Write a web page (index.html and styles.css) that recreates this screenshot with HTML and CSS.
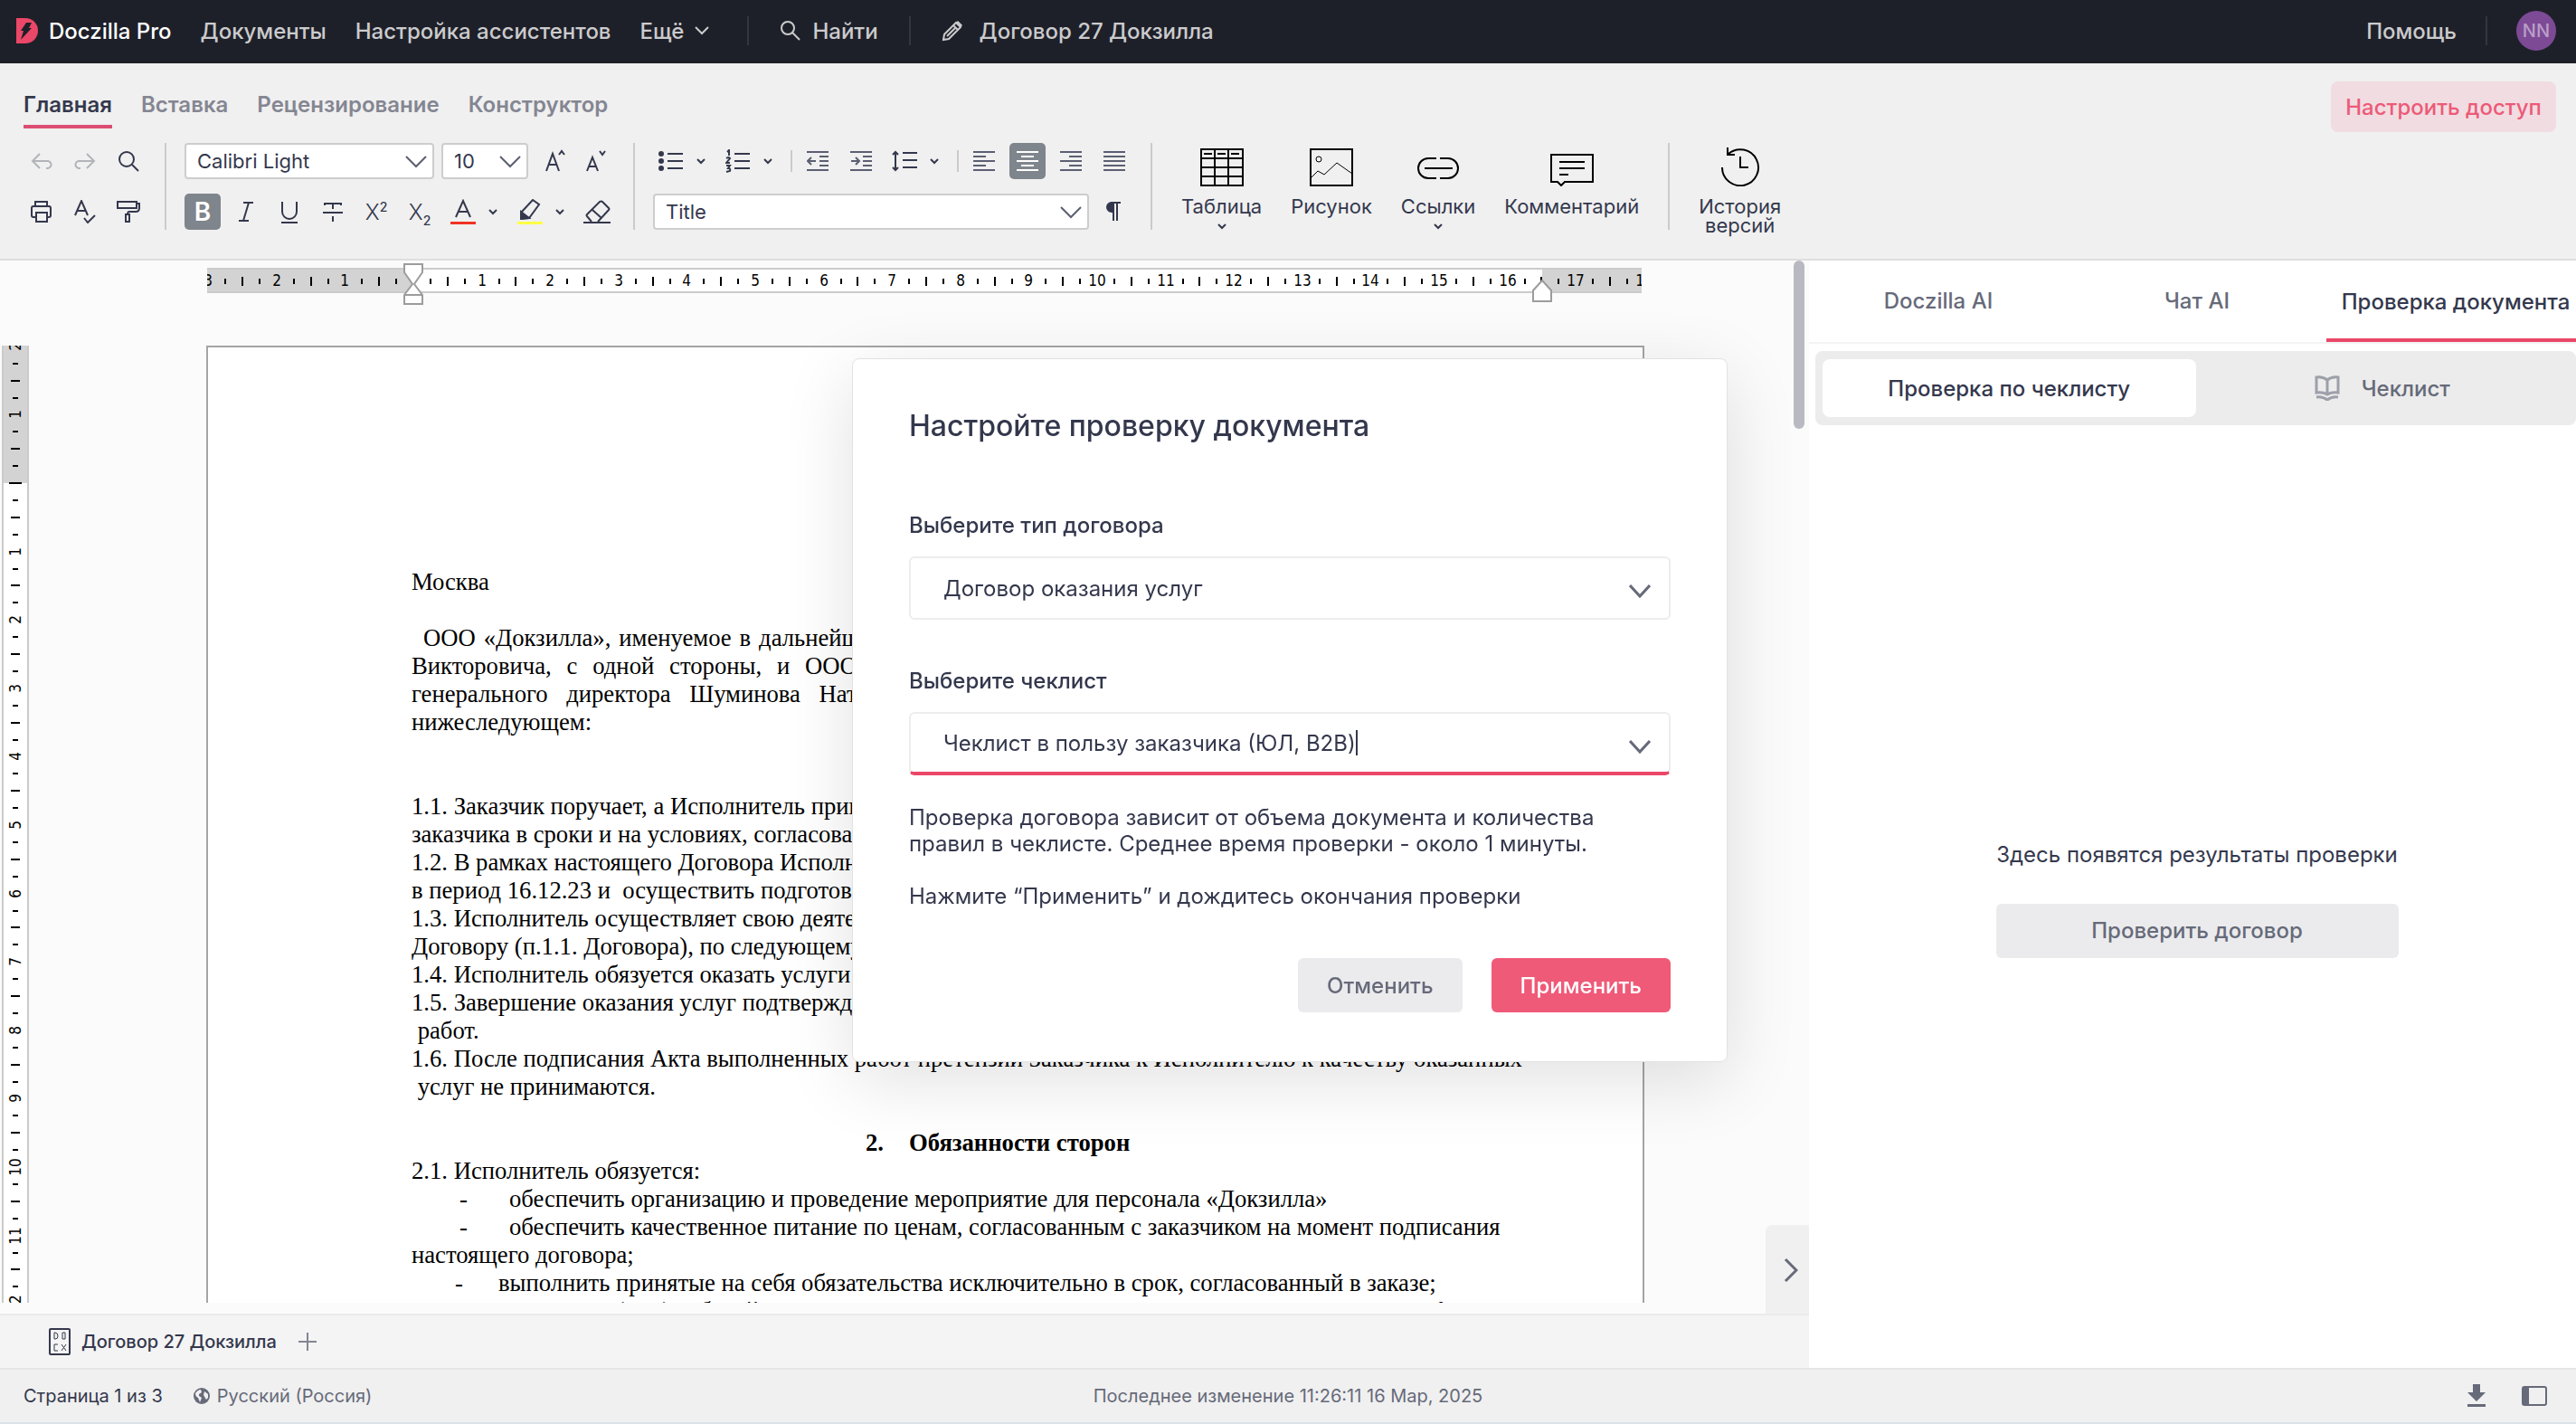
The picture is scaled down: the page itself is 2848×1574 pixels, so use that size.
FILE: index.html
```html
<!DOCTYPE html>
<html lang="ru">
<head>
    <meta charset="UTF-8">
    <meta name="viewport" content="width=device-width, initial-scale=1.0">
    <title>Doczilla Pro</title>
    <link rel="stylesheet" href="styles.css">
</head>
<body>

    <header class="topbar">
        <a class="brand" href="#">
            <svg width="24" height="28" viewBox="0 0 24 28"><path d="M0 0h10a14 14 0 0 1 0 28H0z" fill="#eb4768"/><path d="M11 5h6l-3 6h3L5 24l3-10H5z" fill="#1e2029"/></svg>
            Doczilla Pro
        </a>
        <nav class="topnav">
            <a href="#">Документы</a>
            <a href="#">Настройка ассистентов</a>
            <a class="more" href="#">Ещё
                <svg class="line" width="16" height="10" viewBox="0 0 16 10"><path d="M1 1l7 7 7-7"/></svg>
            </a>
        </nav>
        <span class="top-divider"></span>
        <button class="top-button">
            <svg class="line" width="24" height="24" viewBox="0 0 24 24"><circle cx="9" cy="9" r="7"/><path d="M14 14l8 8"/></svg>
            Найти
        </button>
        <span class="top-divider"></span>
        <button class="top-button doc-name">
            <svg class="line" width="24" height="24" viewBox="0 0 24 24"><path d="M2 22l1-6L16 3l5 5L8 21zM13 6l5 5M6 18L16 8"/><path d="M17 2l5 5" stroke-width="3"/></svg>
            Договор 27 Докзилла
        </button>
        <div class="top-right">
            <a href="#">Помощь</a>
            <span class="top-divider"></span>
            <button class="avatar">NN</button>
        </div>
    </header>

    <section class="ribbon">
        <div class="ribbon-head">
            <nav class="ribbon-tabs">
                <a class="active" href="#">Главная</a>
                <a href="#">Вставка</a>
                <a href="#">Рецензирование</a>
                <a href="#">Конструктор</a>
            </nav>
            <button class="access">Настроить доступ</button>
        </div>

        <div class="toolbar">
            <div class="group">
                <div class="row">
                    <button class="tool muted" aria-label="Отменить ввод"><svg class="line" width="24" height="24" viewBox="0 0 24 24"><path d="M10 4L2 12l8 8M2 12h16a4 4 0 0 1 1 8h-2"/></svg></button>
                    <button class="tool muted" aria-label="Повторить ввод"><svg class="line" width="24" height="24" viewBox="0 0 24 24"><path d="M14 4l8 8-8 8M22 12H6a4 4 0 0 0-1 8h2"/></svg></button>
                    <button class="tool" aria-label="Поиск"><svg class="line" width="24" height="24" viewBox="0 0 24 24"><circle cx="10" cy="10" r="8"/><path d="M16 16l7 7"/></svg></button>
                </div>
                <div class="row">
                    <button class="tool" aria-label="Печать"><svg class="line" width="24" height="24" viewBox="0 0 24 24"><path d="M5 6V1h13v5M5 18H3a2 2 0 0 1-2-2V8a2 2 0 0 1 2-2h17a2 2 0 0 1 2 2v8a2 2 0 0 1-2 2h-2M6 13h12v10H6z"/></svg></button>
                    <button class="tool" aria-label="Правописание"><svg class="line" width="24" height="26" viewBox="0 0 24 26"><path d="M1 17L8 1l7 16M4 12h8M11 20l4 5 8-8"/></svg></button>
                    <button class="tool" aria-label="Формат по образцу"><svg class="line" width="26" height="24" viewBox="0 0 26 24"><path d="M1 1h21v7H1zM22 3h3v5q0 4-4 4h-7q-2 0-2 3M10 15h4v8h-4z"/></svg></button>
                </div>
            </div>
            <span class="divider"></span>

            <div class="group">
                <div class="row">
                    <div class="picker font-picker">
                        <select aria-label="Шрифт"><option>Calibri Light</option></select>
                        <svg class="line" width="24" height="14" viewBox="0 0 24 14"><path d="M1 1l11 11L23 1"/></svg>
                    </div>
                    <div class="picker size-picker">
                        <select aria-label="Размер шрифта"><option>10</option></select>
                        <svg class="line" width="24" height="14" viewBox="0 0 24 14"><path d="M1 1l11 11L23 1"/></svg>
                    </div>
                    <div class="size-steps">
                        <button class="tool" aria-label="Увеличить шрифт"><svg class="line" width="24" height="26" viewBox="0 0 24 26"><path d="M2 24L9 5l7 19M5 17h8M16 6l3-4 3 4"/></svg></button>
                        <button class="tool" aria-label="Уменьшить шрифт"><svg class="line" width="24" height="26" viewBox="0 0 24 26"><path d="M3 24L9 9l6 15M5 19h8M17 2l3 4 3-4"/></svg></button>
                    </div>
                </div>
                <div class="row">
                    <button class="tool pressed bold">B</button>
                    <button class="tool" aria-label="Курсив"><svg class="line" width="24" height="24" viewBox="0 0 24 24"><path d="M9 2h11M4 22h11M15 2L9 22"/></svg></button>
                    <button class="tool" aria-label="Подчёркнутый"><svg class="line" width="24" height="26" viewBox="0 0 24 26"><path d="M4 2v11a8 8 0 0 0 16 0V2M3 25h18"/></svg></button>
                    <button class="tool" aria-label="Зачёркнутый"><svg class="line" width="24" height="24" viewBox="0 0 24 24"><path d="M3 5V3h18v2M12 3v6M1 13h22M12 17v6"/></svg></button>
                    <button class="tool script"><span>X<sup>2</sup></span></button>
                    <button class="tool script"><span>X<sub>2</sub></span></button>
                    <button class="tool" aria-label="Цвет текста"><svg class="line" width="28" height="28" viewBox="0 0 28 28"><path d="M6 20L14 2l8 18M9 14h10"/><path d="M0 25h28v4H0z" fill="#f03224" stroke="none"/></svg></button>
                    <button class="arrow" aria-label="Выбрать цвет текста"><svg class="line" width="10" height="8" viewBox="0 0 10 8"><path d="M1 2l4 4 4-4"/></svg></button>
                    <button class="tool" aria-label="Выделение цветом"><svg class="line" width="28" height="28" viewBox="0 0 28 28"><path d="M4 22v-7L17 1l7 5-11 15z"/><path d="M4 14l9 7-9 1z" fill="#34384d"/><path d="M0 25h28v4H0z" fill="#ffff46" stroke="none"/></svg></button>
                    <button class="arrow" aria-label="Выбрать цвет выделения"><svg class="line" width="10" height="8" viewBox="0 0 10 8"><path d="M1 2l4 4 4-4"/></svg></button>
                    <button class="tool" aria-label="Очистить формат"><svg class="line" width="30" height="26" viewBox="0 0 30 26"><path d="M0 25h30M9 24l-5-6q-1-1 0-2L18 2q2-1 3 0l7 7q1 1 0 2L16 24M10 11l10 9"/></svg></button>
                </div>
            </div>
            <span class="divider"></span>

            <div class="group">
                <div class="row">
                    <button class="tool" aria-label="Маркированный список"><svg class="line" width="28" height="24" viewBox="0 0 28 24"><path d="M10 4h17M10 12h17M10 20h17"/><g fill="#34384d" stroke="none"><circle cx="3" cy="4" r="3"/><circle cx="3" cy="12" r="3"/><circle cx="3" cy="20" r="3"/></g></svg></button>
                    <button class="arrow" aria-label="Вид маркеров"><svg class="line" width="10" height="8" viewBox="0 0 10 8"><path d="M1 2l4 4 4-4"/></svg></button>
                    <button class="tool" aria-label="Нумерованный список"><svg class="line" width="28" height="26" viewBox="0 0 28 26"><path d="M10 5h17M10 13h17M10 21h17M2 3l2-2v6M1 10q3-2 4 0l-4 5h4M1 18h4l-2 3q3 0 2 3l-4 1"/></svg></button>
                    <button class="arrow" aria-label="Вид нумерации"><svg class="line" width="10" height="8" viewBox="0 0 10 8"><path d="M1 2l4 4 4-4"/></svg></button>
                    <span class="small-divider"></span>
                    <button class="tool soft" aria-label="Уменьшить отступ"><svg class="line" width="24" height="24" viewBox="0 0 24 24"><path d="M0 2h24M14 7h10M14 12h10M14 17h10M0 22h24M5 8l-4 4 4 4M1 12h9"/></svg></button>
                    <button class="tool soft" aria-label="Увеличить отступ"><svg class="line" width="24" height="24" viewBox="0 0 24 24"><path d="M0 2h24M14 7h10M14 12h10M14 17h10M0 22h24M6 8l4 4-4 4M10 12H1"/></svg></button>
                    <button class="tool" aria-label="Интервал"><svg class="line" width="28" height="24" viewBox="0 0 28 24"><path d="M4 2v20M1 5l3-3 3 3M1 19l3 3 3-3M12 3h16M12 11h16M12 19h16"/></svg></button>
                    <button class="arrow" aria-label="Выбрать интервал"><svg class="line" width="10" height="8" viewBox="0 0 10 8"><path d="M1 2l4 4 4-4"/></svg></button>
                    <span class="small-divider"></span>
                    <button class="tool soft" aria-label="По левому краю"><svg class="line" width="24" height="24" viewBox="0 0 24 24"><path d="M0 2h24M0 7h14M0 12h24M0 17h14M0 22h24"/></svg></button>
                    <button class="tool pressed" aria-label="По центру"><svg class="line" width="24" height="24" viewBox="0 0 24 24"><path d="M0 2h24M5 7h14M0 12h24M5 17h14M0 22h24"/></svg></button>
                    <button class="tool soft" aria-label="По правому краю"><svg class="line" width="24" height="24" viewBox="0 0 24 24"><path d="M0 2h24M10 7h14M0 12h24M10 17h14M0 22h24"/></svg></button>
                    <button class="tool soft" aria-label="По ширине"><svg class="line" width="24" height="24" viewBox="0 0 24 24"><path d="M0 2h24M0 7h24M0 12h24M0 17h24M0 22h24"/></svg></button>
                </div>
                <div class="row">
                    <div class="picker style-picker">
                        <select aria-label="Стиль"><option>Title</option></select>
                        <svg class="line" width="24" height="14" viewBox="0 0 24 14"><path d="M1 1l11 11L23 1"/></svg>
                    </div>
                    <button class="tool" aria-label="Непечатаемые знаки"><svg class="line" width="24" height="24" viewBox="0 0 24 24"><path d="M11 2v20M15 2v20M8 2h11"/><path d="M11 2v10H9A5 5 0 0 1 9 2z" fill="#34384d"/></svg></button>
                </div>
            </div>
            <span class="divider"></span>

            <div class="big-buttons">
                <button class="big">
                    <svg class="big-icon" width="48" height="48" viewBox="0 0 48 48"><path d="M1 7h46v40H1zM1 17h46M1 27h46M1 37h46M16 7v40M31 7v40M4 12h9M19 12h9M34 12h9"/></svg>
                    Таблица
                    <svg class="line big-arrow" width="10" height="8" viewBox="0 0 10 8"><path d="M1 2l4 4 4-4"/></svg>
                </button>
                <button class="big">
                    <svg class="big-icon" width="48" height="48" viewBox="0 0 48 48"><path d="M1 7h46v40H1z"/><path d="M2 38l7-7 7 4L30 22l17 12" stroke-width="1"/><circle cx="10" cy="18" r="3" stroke-width="1"/></svg>
                    Рисунок
                </button>
                <button class="big">
                    <svg class="big-icon" width="48" height="48" viewBox="0 0 48 48"><path d="M22 17H13a11 11 0 0 0 0 22h9M26 17h9a11 11 0 0 1 0 22h-9M9 28h31"/></svg>
                    Ссылки
                    <svg class="line big-arrow" width="10" height="8" viewBox="0 0 10 8"><path d="M1 2l4 4 4-4"/></svg>
                </button>
                <button class="big">
                    <svg class="big-icon" width="48" height="48" viewBox="0 0 48 48"><path d="M1 13h46v30H16l-4 4-4-4H1zM10 21h28M10 28h28M10 35h10"/></svg>
                    Комментарий
                </button>
            </div>
            <span class="divider"></span>
            <button class="big">
                <svg class="big-icon" width="48" height="48" viewBox="0 0 48 48"><path d="M4 27a20 20 0 1 0 7-15M10 5v8h8M24 15v12h9"/></svg>
                История<br>версий
            </button>
        </div>
    </section>

    <main class="workspace">
        <section class="editor">
            <div class="canvas">
                <div class="h-ruler">
                    <svg id="hRuler" width="100%" height="28"></svg>
                    <svg class="marker indent-marker" width="22" height="46" viewBox="0 0 22 46"><path d="M1 1h20v9l-9 13 9 12v10H1V35l9-12L1 10zM1 35h20"/></svg>
                    <svg class="marker right-marker" width="22" height="26" viewBox="0 0 22 26"><path d="M11 2l10 11v12H1V13z"/></svg>
                </div>
                <div class="sheet-area">
                    <div class="v-ruler"><svg id="vRuler" width="30" height="100%"></svg></div>
                    <article class="sheet">
                        <p>Москва</p>
                        <p class="gap justified first">ООО «Докзилла», именуемое в дальнейшем «Исполнитель», в лице генерального директора Петрова Льва</p>
                        <p class="justified">Викторовича, с одной стороны, и ООО «Сервисный», именуемое в дальнейшем «Заказчик», в лице</p>
                        <p class="justified">генерального директора Шуминова Натана Петровича, совместно заключили настоящий договор о</p>
                        <p>нижеследующем:</p>
                        <p class="gap double">1.1. Заказчик поручает, а Исполнитель принимает на себя обязательства по оказанию услуг для</p>
                        <p>заказчика в сроки и на условиях, согласованных сторонами.</p>
                        <p>1.2. В рамках настоящего Договора Исполнитель обязуется провести мероприятие</p>
                        <p>в период 16.12.23 и &nbsp;осуществить подготовку к нему.</p>
                        <p>1.3. Исполнитель осуществляет свою деятельность по настоящему</p>
                        <p>Договору (п.1.1. Договора), по следующему адресу.</p>
                        <p>1.4. Исполнитель обязуется оказать услуги в полном объеме.</p>
                        <p>1.5. Завершение оказания услуг подтверждается Актом выполненных</p>
                        <p>&nbsp;работ.</p>
                        <p>1.6. После подписания Акта выполненных работ претензии Заказчика к Исполнителю к качеству оказанных</p>
                        <p>&nbsp;услуг не принимаются.</p>
                        <h3 class="gap"><span>2.</span>Обязанности сторон</h3>
                        <p>2.1. Исполнитель обязуется:</p>
                        <p class="item"><span>-</span>обеспечить организацию и проведение мероприятие для персонала «Докзилла»</p>
                        <p class="item"><span>-</span>обеспечить качественное питание по ценам, согласованным с заказчиком на момент подписания</p>
                        <p>настоящего договора;</p>
                        <p class="item near"><span>-</span>выполнить принятые на себя обязательства исключительно в срок, согласованный в заказе;</p>
                        <p class="item near"><span>-</span>провести 2 (Две) рабочей встречи с представителями персонала на площадке Заказчика в офисе</p>
                    </article>
                </div>
                <span class="scroll-thumb"></span>
                <button class="expand" aria-label="Свернуть панель"><svg class="line" width="16" height="28" viewBox="0 0 16 28"><path d="M2 2l12 12L2 26"/></svg></button>
            </div>

            <div class="doc-tabs">
                <a class="doc-tab" href="#">
                    <svg width="24" height="30" viewBox="0 0 24 30" fill="none" stroke="#34384d"><rect x="1" y="1" width="22" height="28" rx="1" stroke-width="2"/><path d="M6 5v7h1q3 0 3-3 0-4-3-4zM15 5h3v7h-3zM10 18H6v7h4M14 18l5 7M19 18l-5 7"/></svg>
                    Договор 27 Докзилла
                </a>
                <button class="add-tab" aria-label="Добавить"><svg class="line" width="20" height="20" viewBox="0 0 20 20"><path d="M10 0v20M0 10h20"/></svg></button>
            </div>
        </section>

        <aside class="panel">
            <nav class="panel-tabs">
                <a href="#">Doczilla AI</a>
                <a href="#">Чат AI</a>
                <a class="active" href="#">Проверка документа</a>
            </nav>
            <div class="segments">
                <button class="active">Проверка по чеклисту</button>
                <button>
                    <svg class="line" width="28" height="28" viewBox="0 0 28 28"><path d="M14 5q-5-4-12-3v17q7-1 12 2 5-3 12-2V2q-7-1-12 3zM14 5v16M2 24q7-1 12 3 5-4 12-3"/></svg>
                    Чеклист
                </button>
            </div>
            <div class="empty">
                <p>Здесь появятся результаты проверки</p>
                <button class="grey-button">Проверить договор</button>
            </div>
        </aside>
    </main>

    <footer class="statusbar">
        <span class="pages">Страница 1 из 3</span>
        <span class="language">
            <svg width="18" height="18" viewBox="0 0 18 18"><circle cx="9" cy="9" r="9" fill="#666a79"/><path d="M2 6q3-4 6-4l1 3-3 2v2l3 2-2 5q-1-3-2-5-3-1-3-5zM12 4l4 3v4l-2 2-3-5z" fill="#f0f0f0"/></svg>
            Русский (Россия)
        </span>
        <span class="changed">Последнее изменение 11:26:11 16 Мар, 2025</span>
        <div class="status-icons">
            <button aria-label="Скачать"><svg width="20" height="26" viewBox="0 0 20 26"><path d="M6 0h8v9h6L10 19 0 9h6zM0 22h20v3H0z" fill="#666a79"/></svg></button>
            <button aria-label="Панель"><svg width="28" height="22" viewBox="0 0 28 22"><rect x="1" y="1" width="26" height="20" rx="2" fill="none" stroke="#666a79" stroke-width="2"/><path d="M1 1h7v20H1z" fill="#666a79"/></svg></button>
        </div>
    </footer>

    <div class="backdrop">
        <form class="modal">
            <h2>Настройте проверку документа</h2>
            <label for="contractType">Выберите тип договора</label>
            <div class="field">
                <select id="contractType"><option>Договор оказания услуг</option></select>
                <svg class="line" width="24" height="16" viewBox="0 0 24 16"><path d="M1 1l11 12L23 1"/></svg>
            </div>
            <label for="checklist">Выберите чеклист</label>
            <div class="field focused">
                <input type="text" id="checklist" value="Чеклист в пользу заказчика (ЮЛ, B2B)">
                <span class="caret"></span>
                <svg class="line" width="24" height="16" viewBox="0 0 24 16"><path d="M1 1l11 12L23 1"/></svg>
            </div>
            <p>Проверка договора зависит от объема документа и количества<br>правил в чеклисте. Среднее время проверки - около 1 минуты.</p>
            <p>Нажмите “Применить” и дождитесь окончания проверки</p>
            <div class="modal-buttons">
                <button type="button" class="grey-button">Отменить</button>
                <button type="button" class="apply">Применить</button>
            </div>
        </form>
    </div>

    <script>
        // one centimetre on both rulers, in hundredths of a pixel
        const cm = 7560;

        // marks every quarter of a centimetre, with a number on each whole one
        function drawRuler(id, origin, fromQ, toQ, vertical) {
            let html = '';
            const mid = vertical ? 15 : 14;

            for (let q = fromQ; q <= toQ; q++) {
                const pos = Math.round(origin + q * cm / 400);

                if (q % 4 === 0 && q !== 0) {
                    const num = Math.abs(q / 4);
                    html += vertical
                        ? `<text transform="translate(${mid + 6} ${pos}) rotate(-90)">${num}</text>`
                        : `<text x="${pos}" y="${mid + 6}">${num}</text>`;
                    continue;
                }

                const half = q === 0 ? 7 : (q % 2 === 0 ? 5 : 3);
                html += vertical
                    ? `<rect x="${mid - half}" y="${pos - 1}" width="${half * 2}" height="2"/>`
                    : `<rect x="${pos - 1}" y="${mid + 1 - half}" width="2" height="${half * 2}"/>`;
            }

            document.getElementById(id).innerHTML = html;
        }

        drawRuler('hRuler', 228, -12, 72, false);
        drawRuler('vRuler', 152, -8, 100, true);
    </script>

</body>
</html>
```

FILE: styles.css
```css
* {
    box-sizing: border-box;
}
body {
    margin: 0;
    height: 100vh;
    display: flex;
    flex-direction: column;
    overflow: hidden;
    font-family: Inter, "Liberation Sans", sans-serif;
    font-size: 24px;
    color: #34384d;
    background-color: white;
    border-bottom: 2px solid #dbe3ea;
}
a {
    color: inherit;
    text-decoration: none;
}
button {
    font: inherit;
    color: inherit;
    border: none;
    padding: 0;
    background: none;
    cursor: pointer;
}
select, input {
    font: inherit;
    color: inherit;
    border: none;
    outline: none;
    background: none;
    appearance: none;
}
p, h2, h3 {
    margin: 0;
}
svg {
    flex-shrink: 0;
}
.line {
    fill: none;
    stroke: currentColor;
    stroke-width: 2;
}

/* top bar */
.topbar {
    height: 70px;
    flex-shrink: 0;
    display: flex;
    align-items: center;
    padding: 0 22px 2px 18px;
    background-color: #1e2029;
    color: #cbcbcd;
    font-weight: 500;
    white-space: nowrap;
}
.brand {
    display: flex;
    align-items: center;
    gap: 12px;
    color: white;
}
.topnav {
    display: flex;
    gap: 32px;
    margin: 0 42px 0 32px;
}
.more {
    display: flex;
    align-items: center;
    gap: 12px;
}
.top-divider {
    width: 2px;
    height: 32px;
    background-color: #34363f;
}
.top-button {
    display: flex;
    align-items: center;
    gap: 12px;
    margin: 0 34px;
}
.doc-name {
    gap: 18px;
}
.top-right {
    margin-left: auto;
    display: flex;
    align-items: center;
    gap: 32px;
}
.avatar {
    width: 44px;
    height: 44px;
    border-radius: 50%;
    background-color: #7d4a96;
    color: #b99fc6;
    font-size: 20px;
}

/* ribbon */
.ribbon {
    flex-shrink: 0;
    padding: 20px 22px 32px 26px;
    background-color: #f0f0f0;
    border-bottom: 2px solid #dedede;
}
.ribbon-head {
    display: flex;
    justify-content: space-between;
    height: 68px;
}
.ribbon-tabs {
    display: flex;
    gap: 32px;
    height: 52px;
    font-weight: 600;
    color: #848692;
}
.ribbon-tabs a {
    padding-top: 4px;
    line-height: 44px;
    border-bottom: 4px solid transparent;
}
.ribbon-tabs .active {
    color: #34384d;
    border-color: #dc4d73;
}
.access {
    width: 249px;
    height: 56px;
    border-radius: 8px;
    background-color: #f1dce1;
    color: #ec5a78;
    font-weight: 500;
}
.toolbar {
    display: flex;
    height: 96px;
}
.group {
    display: flex;
    flex-direction: column;
    gap: 16px;
}
.row {
    display: flex;
    gap: 8px;
    height: 40px;
}
.divider {
    width: 2px;
    margin: 0 20px;
    background-color: #cbcbcb;
}
.small-divider {
    width: 2px;
    margin: 8px 0 8px 4px;
    background-color: #cbcbcb;
}
.tool {
    width: 40px;
    height: 40px;
    display: flex;
    align-items: center;
    justify-content: center;
    border-radius: 5px;
}
.muted {
    color: #b3b4bb;
}
.soft {
    color: #5b5f72;
}
.pressed {
    background-color: #7f858c;
    color: white;
}
.bold {
    font-weight: 600;
    font-size: 28px;
}
.script {
    font-size: 24px;
    font-weight: 300;
}
.script sup, .script sub {
    font-size: 14px;
    font-weight: 500;
    line-height: 0;
}
.arrow {
    width: 26px;
    display: flex;
    align-items: center;
    justify-content: center;
    margin-left: -8px;
}
.size-steps {
    display: flex;
}
.size-steps .tool {
    width: 44px;
}
.picker {
    position: relative;
    background-color: white;
    border: 2px solid #cdcdcd;
    border-radius: 4px;
}
.picker select {
    width: 100%;
    height: 36px;
    padding: 0 12px;
    font-size: 22px;
}
.picker svg {
    position: absolute;
    right: 6px;
    top: 12px;
    color: #5b5f72;
    pointer-events: none;
}
.font-picker {
    width: 276px;
}
.size-picker {
    width: 96px;
}
.style-picker {
    flex: 1;
}
.big-buttons {
    display: flex;
    gap: 32px;
}
.big-buttons, .toolbar > .big {
    margin: 0 12px;
}
.big {
    display: flex;
    flex-direction: column;
    align-items: center;
    font-size: 22px;
    line-height: 21px;
}
.big-icon {
    margin-bottom: 12px;
    fill: none;
    stroke: black;
    stroke-width: 2;
}
.big-arrow {
    margin-top: 7px;
}

/* editor */
.workspace {
    flex: 1;
    min-height: 0;
    display: flex;
}
.editor {
    flex: 1;
    min-width: 0;
    display: flex;
    flex-direction: column;
}
.canvas {
    position: relative;
    flex: 1;
    min-height: 0;
    display: flex;
    flex-direction: column;
    padding-bottom: 12px;
    background-color: #fbfbfb;
}
.h-ruler {
    position: relative;
    width: 1586px;
    height: 28px;
    flex-shrink: 0;
    margin: 8px 0 58px 229px;
    border: solid #cbcbcb;
    border-width: 2px 0;
    background: linear-gradient(to right, #d3d3d3 228px, white 228px, white 1476px, #d3d3d3 1476px);
}
#hRuler {
    display: block;
    margin-top: -2px;
}
#hRuler text, #vRuler text {
    font-family: "DejaVu Sans Condensed", "DejaVu Sans", sans-serif;
    font-size: 17px;
    text-anchor: middle;
}
.marker {
    position: absolute;
    fill: white;
    stroke: #9c9c9c;
    stroke-width: 2;
}
.indent-marker {
    left: 217px;
    top: -7px;
}
.right-marker {
    left: 1465px;
    top: 10px;
}
.sheet-area {
    flex: 1;
    min-height: 0;
    display: flex;
    overflow: hidden;
}
.v-ruler {
    width: 30px;
    flex-shrink: 0;
    margin-left: 2px;
    overflow: hidden;
    border: solid #cbcbcb;
    border-width: 0 2px;
    background: linear-gradient(#d3d3d3 152px, white 152px);
}
#vRuler {
    display: block;
    margin-left: -2px;
}
.sheet {
    width: 1590px;
    height: 2200px;
    flex-shrink: 0;
    margin-left: 196px;
    padding: 244px 111px 0 225px;
    background-color: white;
    border: 2px solid #a5a5a5;
    font-family: "Liberation Serif", serif;
    font-size: 20pt;
    line-height: 31px;
    color: black;
    white-space: nowrap;
}
.gap {
    margin-top: 31px;
}
.double {
    margin-top: 62px;
}
.justified {
    white-space: normal;
    text-align: justify;
    text-align-last: justify;
}
.first {
    padding-left: 13px;
}
.sheet h3 {
    font-size: inherit;
    padding-left: 502px;
}
.sheet h3 span {
    display: inline-block;
    width: 48px;
}
.item {
    padding-left: 53px;
}
.item span {
    display: inline-block;
    width: 55px;
}
.near {
    padding-left: 48px;
}
.near span {
    width: 48px;
}
.scroll-thumb {
    position: absolute;
    right: 5px;
    top: 0;
    width: 12px;
    height: 186px;
    border-radius: 6px;
    background-color: #b9bac1;
}
.expand {
    position: absolute;
    right: 0;
    bottom: 0;
    width: 48px;
    height: 98px;
    border-radius: 8px 0 0 0;
    background-color: #f0f0f0;
    color: #666a79;
}
.expand svg {
    vertical-align: middle;
    stroke-width: 3;
    margin-left: 8px;
}
.doc-tabs {
    height: 60px;
    flex-shrink: 0;
    display: flex;
    align-items: center;
    gap: 24px;
    padding-left: 54px;
    background-color: #f4f4f4;
    border-top: 2px solid #ebebeb;
    font-size: 20px;
    font-weight: 500;
}
.doc-tab {
    display: flex;
    align-items: center;
    gap: 12px;
}
.add-tab {
    height: 20px;
    color: #848692;
}
.add-tab svg {
    display: block;
}

/* right panel */
.panel {
    width: 848px;
    flex-shrink: 0;
    display: flex;
    flex-direction: column;
    overflow: hidden;
}
.panel-tabs {
    display: grid;
    grid-template-columns: repeat(3, 1fr);
    height: 92px;
    margin-right: -10px;
    border-bottom: 2px solid #f4f4f4;
    line-height: 90px;
    text-align: center;
    font-weight: 500;
    color: #666a79;
}
.panel-tabs .active {
    padding-top: 6px;
    line-height: 80px;
    color: #34384d;
    border-bottom: 4px solid #eb4768;
}
.segments {
    display: flex;
    height: 82px;
    margin: 8px 0 0 7px;
    padding: 9px 8px;
    border-radius: 8px;
    background-color: #ececec;
    font-weight: 500;
    color: #666a79;
}
.segments button {
    flex: 1;
    display: flex;
    align-items: center;
    justify-content: center;
    gap: 24px;
    border-radius: 8px;
}
.segments .active {
    background-color: white;
    color: #34384d;
}
.segments svg {
    color: #9d9fa9;
    stroke-width: 3;
}
.empty {
    flex: 1;
    display: flex;
    flex-direction: column;
    align-items: center;
    justify-content: center;
    gap: 40px;
    margin-left: 10px;
    padding-top: 6px;
}
.empty .grey-button {
    width: 445px;
}
.grey-button {
    height: 60px;
    padding: 0 32px;
    border-radius: 6px;
    background-color: #ebebed;
    color: #666a79;
    font-weight: 500;
}

/* status bar */
.statusbar {
    height: 60px;
    flex-shrink: 0;
    display: flex;
    align-items: center;
    position: relative;
    padding: 0 32px 0 26px;
    border-top: 2px solid #e6e6e6;
    background-color: #f0f0f0;
    font-size: 20px;
    color: #666a79;
}
.pages {
    color: #34384d;
}
.language {
    display: flex;
    align-items: center;
    gap: 8px;
    margin-left: 34px;
}
.changed {
    position: absolute;
    left: 0;
    right: 0;
    text-align: center;
    pointer-events: none;
}
.status-icons {
    display: flex;
    align-items: center;
    gap: 40px;
    margin-left: auto;
}
.status-icons svg {
    display: block;
}

/* modal */
.backdrop {
    position: fixed;
    inset: 0;
    display: flex;
    align-items: center;
    justify-content: center;
    padding: 0 0 4px 4px;
}
.modal {
    width: 968px;
    padding: 54px 62px;
    background-color: white;
    border: 1px solid #e2e2e2;
    border-radius: 8px;
    box-shadow: 0 20px 80px rgba(0, 0, 0, 0.12);
}
.modal h2 {
    margin-bottom: 76px;
    font-size: 32px;
    font-weight: 500;
    line-height: 40px;
}
.modal label {
    display: block;
    margin-bottom: 20px;
    font-weight: 500;
    line-height: 28px;
}
.field {
    position: relative;
    display: flex;
    align-items: center;
    height: 70px;
    margin-bottom: 54px;
    border: 2px solid #ededed;
    border-radius: 6px;
}
.field select {
    width: 100%;
    height: 66px;
    padding: 0 36px;
}
.field input {
    field-sizing: content;
    padding: 0 0 0 36px;
}
.field svg {
    position: absolute;
    right: 20px;
    top: 29px;
    color: #666a79;
    stroke-width: 3;
    pointer-events: none;
}
.caret {
    width: 2px;
    height: 28px;
    background-color: #34384d;
}
.focused {
    margin-bottom: 32px;
    border-bottom: 4px solid #eb4768;
}
.modal p {
    margin-bottom: 29px;
    line-height: 29px;
}
.modal-buttons {
    display: flex;
    justify-content: flex-end;
    gap: 32px;
    margin-top: 54px;
}
.apply {
    height: 60px;
    padding: 0 32px;
    border-radius: 6px;
    background-color: #ef5a78;
    color: white;
    font-weight: 500;
}
```
